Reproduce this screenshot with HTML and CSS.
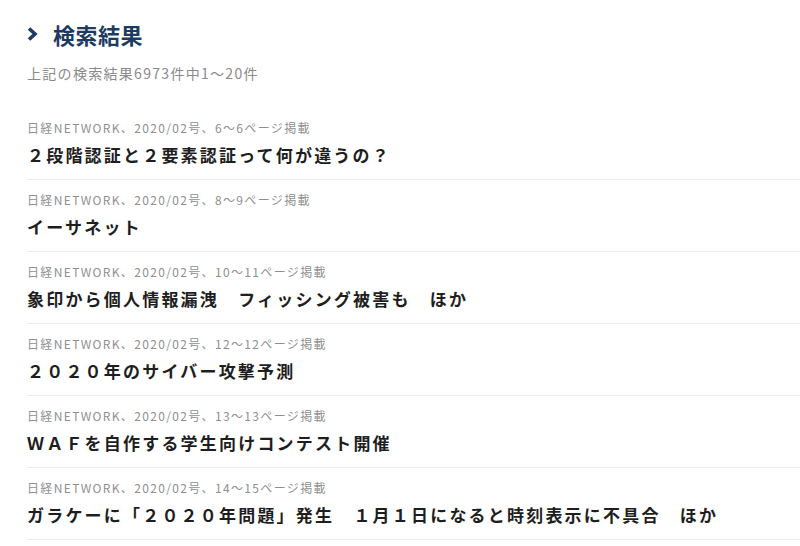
FILE: index.html
```html
<!DOCTYPE html>
<html lang="ja">
<head>
<meta charset="utf-8">
<link rel="stylesheet" href="styles.css">
</head>
<body>
<main class="page">
  <h1 class="heading">
    <svg class="chev" width="11" height="14" viewBox="0 0 11 14"><polyline points="2,1.5 8,7 2,12.5" fill="none" stroke="#1d3b62" stroke-width="3.6" stroke-linejoin="miter"/></svg>
    <span>検索結果</span>
  </h1>
  <p class="summary">上記の検索結果6973件中1〜20件</p>
  <ul class="results">
    <li class="item"><div class="meta">日経NETWORK、2020/02号、6〜6ページ掲載</div><div class="title">２段階認証と２要素認証って何が違うの？</div></li>
    <li class="item"><div class="meta">日経NETWORK、2020/02号、8〜9ページ掲載</div><div class="title">イーサネット</div></li>
    <li class="item"><div class="meta">日経NETWORK、2020/02号、10〜11ページ掲載</div><div class="title">象印から個人情報漏洩　フィッシング被害も　ほか</div></li>
    <li class="item"><div class="meta">日経NETWORK、2020/02号、12〜12ページ掲載</div><div class="title">２０２０年のサイバー攻撃予測</div></li>
    <li class="item"><div class="meta">日経NETWORK、2020/02号、13〜13ページ掲載</div><div class="title">ＷＡＦを自作する学生向けコンテスト開催</div></li>
    <li class="item"><div class="meta">日経NETWORK、2020/02号、14〜15ページ掲載</div><div class="title">ガラケーに「２０２０年問題」発生　１月１日になると時刻表示に不具合　ほか</div></li>
  </ul>
</main>
</body>
</html>
```
FILE: styles.css
```css
html, body {
  margin: 0;
  padding: 0;
  background: #ffffff;
}
body {
  font-family: "Noto Sans CJK JP", "Noto Sans", sans-serif;
  overflow: hidden;
}
.page {
  padding: 19px 0 0 27px;
}
.heading {
  margin: 0;
  display: flex;
  align-items: center;
  gap: 15px;
  height: 30px;
  font-size: 22px;
  font-weight: 700;
  color: #1d3b62;
  line-height: 30px;
  letter-spacing: 0.5px;
}
.chev {
  display: block;
}
.summary {
  margin: 14px 0 0 0;
  font-size: 14px;
  line-height: 20px;
  color: #8a8a8a;
  letter-spacing: 1.3px;
}
.results {
  list-style: none;
  margin: 25px 0 0 0;
  padding: 0;
}
.item {
  padding: 12px 0 12px 0;
  border-bottom: 1px solid #ececec;
}
.meta {
  font-size: 12px;
  line-height: 16px;
  color: #8f8f8f;
  letter-spacing: 1.35px;
}
.title {
  margin-top: 7px;
  font-size: 17px;
  line-height: 24px;
  font-weight: 700;
  color: #1e1e1e;
  letter-spacing: 2.2px;
  white-space: nowrap;
}
```
